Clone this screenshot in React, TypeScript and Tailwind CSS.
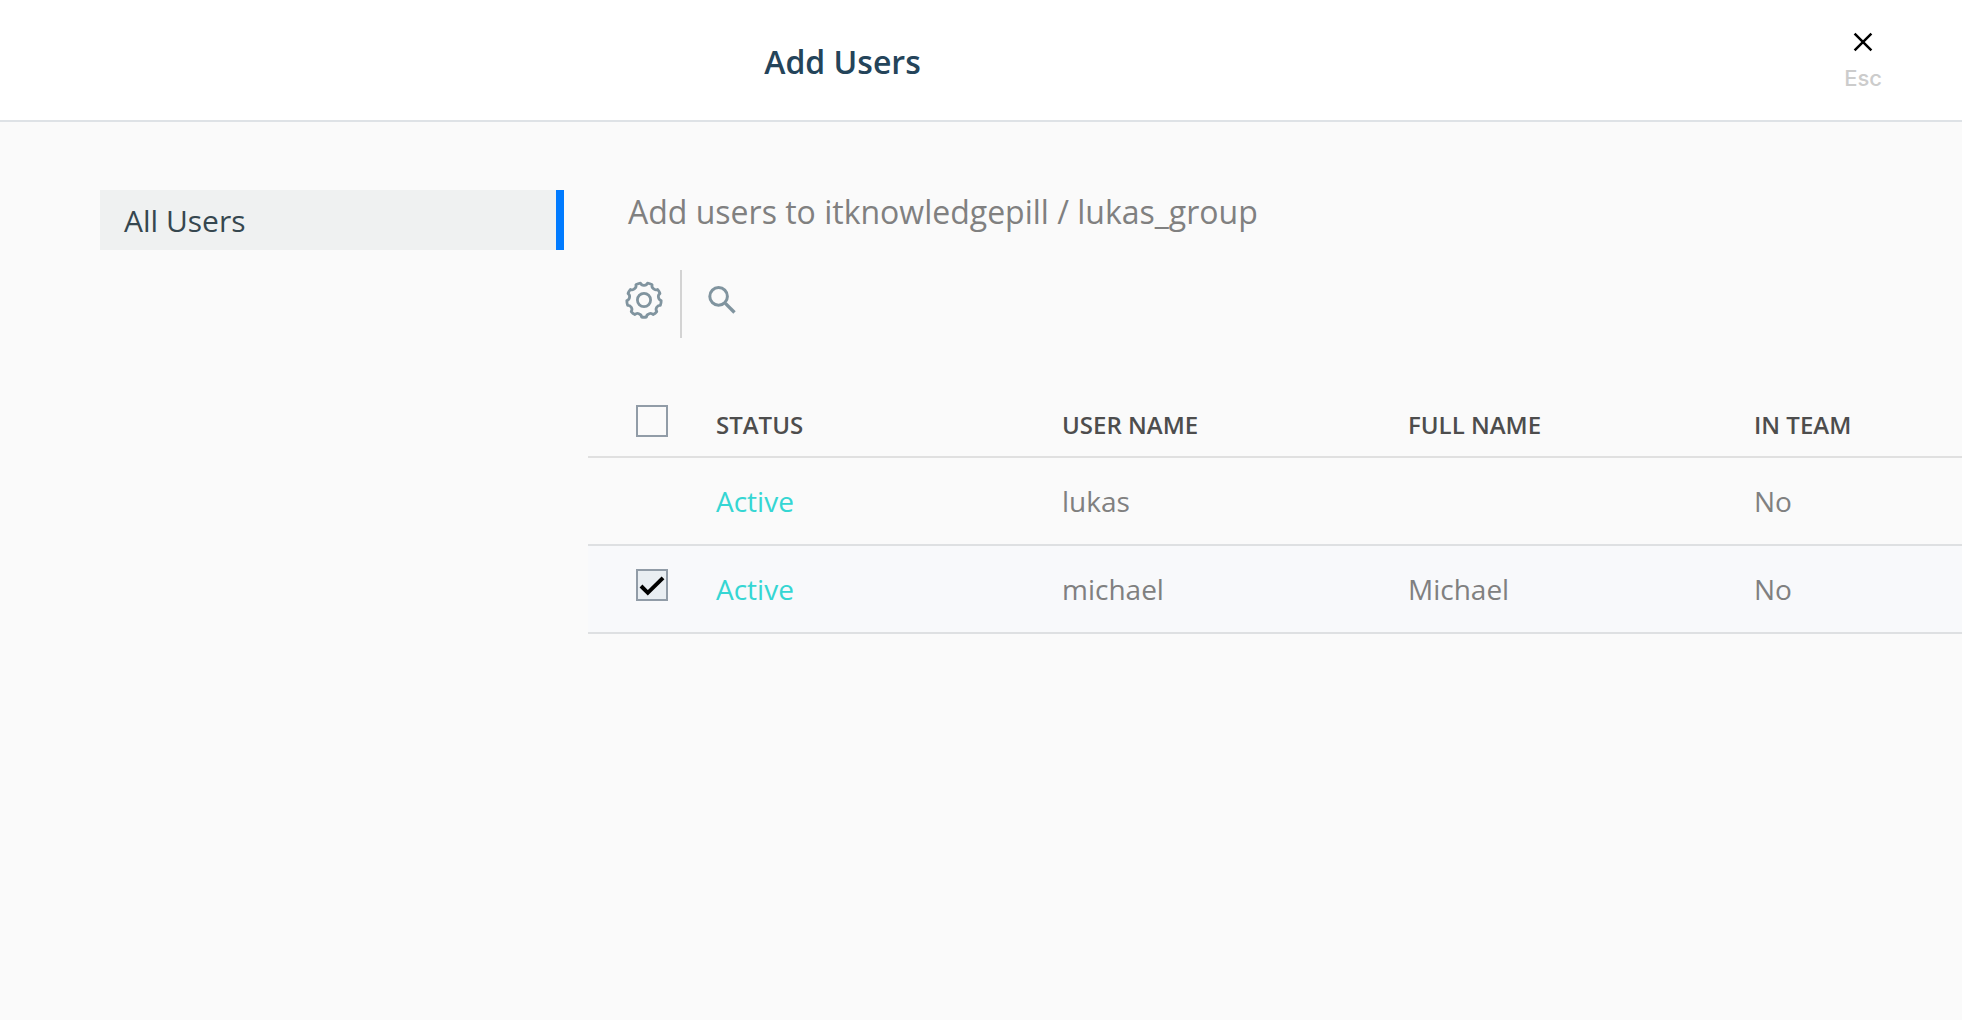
const columns = ['Status', 'User Name', 'Full Name', 'In Team'];

const users = [
  { status: 'Active', userName: 'lukas', fullName: '', inTeam: 'No', selectable: false },
  { status: 'Active', userName: 'michael', fullName: 'Michael', inTeam: 'No', selectable: true },
];

function gearPath(teeth: number, outer: number, inner: number) {
  const parts: string[] = [];
  const step = (Math.PI * 2) / teeth;
  const point = (radius: number, angle: number) =>
    `${(20 + radius * Math.sin(angle)).toFixed(2)} ${(20 - radius * Math.cos(angle)).toFixed(2)}`;
  for (let i = 0; i < teeth; i++) {
    const a = i * step + step / 2;
    parts.push(`${i === 0 ? 'M' : 'L'}${point(outer, a - step * 0.2)}`);
    parts.push(`Q${point(outer + 0.3, a)} ${point(outer, a + step * 0.2)}`);
    parts.push(`C${point(inner + 0.2, a + step * 0.25)} ${point(inner, a + step * 0.32)} ${point(inner, a + step * 0.5)}`);
    parts.push(`C${point(inner, a + step * 0.68)} ${point(inner + 0.2, a + step * 0.75)} ${point(outer, a + step * 0.8)}`);
  }
  return parts.join('') + 'Z';
}

function GearIcon() {
  return (
    <svg className="size-10" viewBox="0 0 40 40" fill="none" stroke="currentColor" strokeWidth="2.8" strokeLinejoin="round" aria-hidden="true">
      <path d={gearPath(9, 17.2, 14.7)} />
      <circle cx="20" cy="20" r="6.6" />
    </svg>
  );
}

function SearchIcon() {
  return (
    <svg className="size-8" viewBox="0 0 32 32" fill="none" stroke="currentColor" strokeWidth="3" aria-hidden="true">
      <circle cx="12.6" cy="12.4" r="8.8" />
      <path d="M19.4 19.4 28.5 28.5" strokeWidth="3.4" />
    </svg>
  );
}

function CloseIcon() {
  return (
    <svg className="size-5" viewBox="0 0 20 20" fill="none" stroke="currentColor" strokeWidth="2.5" aria-hidden="true">
      <path d="M1.6 1.6 18.4 18.4M18.4 1.6 1.6 18.4" />
    </svg>
  );
}

function Checkbox({ label, checked = false }: { label: string; checked?: boolean }) {
  return (
    <label className="grid size-8 cursor-pointer">
      <input
        type="checkbox"
        aria-label={label}
        defaultChecked={checked}
        className="peer col-start-1 row-start-1 size-8 appearance-none border-2 border-[#919ca7] checked:bg-[#e9eef2]"
      />
      <svg className="pointer-events-none invisible col-start-1 row-start-1 size-8 peer-checked:visible" viewBox="0 0 32 32" fill="none" stroke="#000" strokeWidth="4" aria-hidden="true">
        <path d="M5 17 11.8 23.8 27 8.8" />
      </svg>
    </label>
  );
}

export default function App() {
  return (
    <div className="flex min-h-screen flex-col bg-[#fafafa] font-['Open_Sans',sans-serif]">
      <header className="flex h-[122px] items-center border-b-2 border-[#dee2e6] bg-white">
        <h1 className="flex-1 pt-1 text-center text-[32px] leading-10 font-semibold text-[#24445a]">Add Users</h1>
        <div className="flex w-[277px] justify-end pt-1 pr-20">
          <button type="button" className="flex cursor-pointer flex-col items-center gap-3 text-black">
            <CloseIcon />
            <span className="font-['Inter',sans-serif] text-[22px] leading-7 font-medium text-[#cccccc]">Esc</span>
          </button>
        </div>
      </header>

      <div className="flex flex-1 gap-6 pt-[68px] pl-[100px]">
        <nav className="w-[464px] shrink-0">
          <a href="#all-users" className="flex h-[60px] items-center border-r-8 border-[#007bff] bg-[#eff1f1] pl-6 text-[30px] text-[#36474f]">
            All Users
          </a>
        </nav>

        <main className="min-w-0 flex-1">
          <h2 className="pl-10 text-[32px] leading-[44px] text-[#808080]">Add users to itknowledgepill / lukas_group</h2>

          <div className="mt-9 flex h-[68px] items-center pl-9 text-[#80949f]">
            <button type="button" aria-label="Settings" className="cursor-pointer pb-2">
              <GearIcon />
            </button>
            <span className="ml-4 h-full w-0.5 bg-[#d3d3d3]" />
            <button type="button" aria-label="Search" className="ml-6 cursor-pointer pb-2">
              <SearchIcon />
            </button>
          </div>

          <table className="mt-[55px] w-full table-fixed border-collapse text-left">
            <thead>
              <tr className="h-[64px] border-b-2 border-[#e0e0e0]">
                <th className="w-32 pt-3 pl-12 align-top">
                  <Checkbox label="Select all users" />
                </th>
                {columns.map((column, index) => (
                  <th key={column} scope="col" className={`${index < 3 ? 'w-[346px]' : ''} text-2xl font-semibold text-[#4d4d4d] uppercase`}>
                    {column}
                  </th>
                ))}
              </tr>
            </thead>
            <tbody className="text-[28px] text-[#808080]">
              {users.map((user) => (
                <tr key={user.userName} className={`h-[88px] border-b-2 border-[#dee0e2] ${user.selectable ? 'bg-[#f8f9fb]' : ''}`}>
                  <td className="pt-[23px] pl-12 align-top">
                    {user.selectable && <Checkbox label={`Select ${user.userName}`} checked />}
                  </td>
                  <td className="text-[#35d6d3]">{user.status}</td>
                  <td>{user.userName}</td>
                  <td>{user.fullName}</td>
                  <td>{user.inTeam}</td>
                </tr>
              ))}
            </tbody>
          </table>
        </main>
      </div>
    </div>
  );
}
